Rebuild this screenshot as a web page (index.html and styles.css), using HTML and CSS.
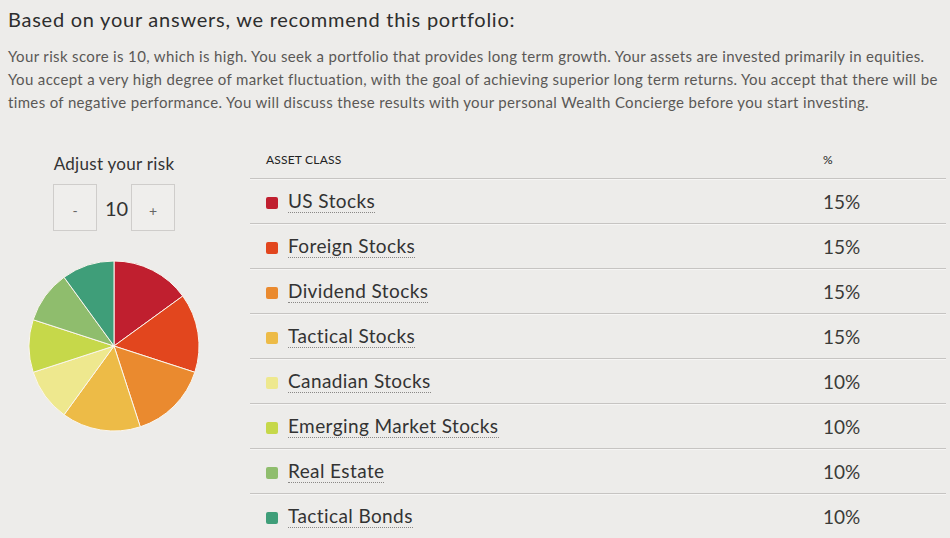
FILE: index.html
```html
<!DOCTYPE html>
<html>
<head>
<meta charset="utf-8">
<link rel="stylesheet" href="styles.css">
</head>
<body>
<h1 class="title">Based on your answers, we recommend this portfolio:</h1>
<p class="summary">Your risk score is 10, which is high. You seek a portfolio that provides long term growth. Your assets are invested primarily in equities. You accept a very high degree of market fluctuation, with the goal of achieving superior long term returns. You accept that there will be times of negative performance. You will discuss these results with your personal Wealth Concierge before you start investing.</p>
<div class="main">
  <div class="side">
    <div class="adjust-label">Adjust your risk</div>
    <div class="stepper">
      <button class="step-btn">-</button>
      <span class="step-val">10</span>
      <button class="step-btn">+</button>
    </div>
    <svg class="pie" width="172" height="172" viewBox="-86 -86 172 172">
      <g stroke="#fbf6ee" stroke-width="1" stroke-linejoin="round">
        <path d="M0 0 L0 -85 A85 85 0 0 1 68.77 -49.96 Z" fill="#c01f2f"/>
        <path d="M0 0 L68.77 -49.96 A85 85 0 0 1 80.84 26.27 Z" fill="#e2461e"/>
        <path d="M0 0 L80.84 26.27 A85 85 0 0 1 26.27 80.84 Z" fill="#ea8a2f"/>
        <path d="M0 0 L26.27 80.84 A85 85 0 0 1 -49.96 68.77 Z" fill="#edbb47"/>
        <path d="M0 0 L-49.96 68.77 A85 85 0 0 1 -80.84 26.27 Z" fill="#eee88e"/>
        <path d="M0 0 L-80.84 26.27 A85 85 0 0 1 -80.84 -26.27 Z" fill="#c6d84a"/>
        <path d="M0 0 L-80.84 -26.27 A85 85 0 0 1 -49.96 -68.77 Z" fill="#8fbd6d"/>
        <path d="M0 0 L-49.96 -68.77 A85 85 0 0 1 0 -85 Z" fill="#3f9e79"/>
      </g>
    </svg>
  </div>
  <div class="table">
    <div class="row head">
      <div class="cell-name">ASSET CLASS</div>
      <div class="cell-pct">%</div>
    </div>
    <div class="row">
      <div class="cell-name"><span class="swatch c1"></span><span class="asset">US Stocks</span></div>
      <div class="cell-pct">15%</div>
    </div>
    <div class="row">
      <div class="cell-name"><span class="swatch c2"></span><span class="asset">Foreign Stocks</span></div>
      <div class="cell-pct">15%</div>
    </div>
    <div class="row">
      <div class="cell-name"><span class="swatch c3"></span><span class="asset">Dividend Stocks</span></div>
      <div class="cell-pct">15%</div>
    </div>
    <div class="row">
      <div class="cell-name"><span class="swatch c4"></span><span class="asset">Tactical Stocks</span></div>
      <div class="cell-pct">15%</div>
    </div>
    <div class="row">
      <div class="cell-name"><span class="swatch c5"></span><span class="asset">Canadian Stocks</span></div>
      <div class="cell-pct">10%</div>
    </div>
    <div class="row">
      <div class="cell-name"><span class="swatch c6"></span><span class="asset">Emerging Market Stocks</span></div>
      <div class="cell-pct">10%</div>
    </div>
    <div class="row">
      <div class="cell-name"><span class="swatch c7"></span><span class="asset">Real Estate</span></div>
      <div class="cell-pct">10%</div>
    </div>
    <div class="row">
      <div class="cell-name"><span class="swatch c8"></span><span class="asset">Tactical Bonds</span></div>
      <div class="cell-pct">10%</div>
    </div>
  </div>
</div>
</body>
</html>
```
FILE: styles.css
```css
html, body {
  background: #edecea;
}
body {
  margin: 0;
  padding: 0 0 0 8px;
  font-family: Lato, "Open Sans", sans-serif;
  color: #333;
  overflow: hidden;
}
.title {
  margin: 0;
  padding-top: 7px;
  font-size: 20px;
  font-weight: 400;
  line-height: 24px;
  letter-spacing: 0.75px;
  color: #2e2e2e;
}
.summary {
  margin: 14px 0 0 0;
  font-size: 15px;
  line-height: 23px;
  letter-spacing: 0.35px;
  color: #5a5856;
}
.main {
  display: flex;
  gap: 30px;
  margin-top: 27px;
}
.side {
  width: 212px;
  display: flex;
  flex-direction: column;
  align-items: center;
  padding-top: 13px;
}
.adjust-label {
  font-size: 17px;
  line-height: 20px;
  letter-spacing: 0.3px;
  color: #333;
}
.stepper {
  display: flex;
  align-items: center;
  gap: 8px;
  margin-top: 10px;
}
.step-btn {
  width: 44px;
  height: 47px;
  border: 1px solid #cfcdcb;
  background: #efeeec;
  font-family: Lato, sans-serif;
  font-size: 14px;
  color: #666;
  padding: 0;
  padding-top: 6px;
}
.step-val {
  font-size: 20px;
  color: #333;
  width: 18px;
  text-align: center;
}
.pie {
  margin-top: 29px;
  display: block;
}
.table {
  width: 696px;
}
.row {
  display: flex;
  align-items: center;
  height: 44px;
  border-bottom: 1px solid #c6c4c2;
  box-shadow: 0 1px 0 #f6f5f4;
}
.row.head {
  height: 37px;
}
.head .cell-name, .head .cell-pct {
  font-size: 12px;
  letter-spacing: 0.2px;
  color: #222;
}
.cell-name {
  flex: 1;
  padding-left: 16px;
  display: flex;
  align-items: center;
  font-size: 19px;
}
.cell-pct {
  width: 123px;
  font-size: 19px;
  color: #3a3a38;
}
.swatch {
  width: 12px;
  height: 12px;
  border-radius: 2px;
  margin-right: 10px;
  margin-top: 4px;
}
.asset {
  color: #333;
  border-bottom: 1px dotted #8a8886;
  line-height: 22px;
  letter-spacing: 0.4px;
}
.c1 { background: #c01f2f; }
.c2 { background: #e2461e; }
.c3 { background: #ea8a2f; }
.c4 { background: #edbb47; }
.c5 { background: #eee88e; }
.c6 { background: #c6d84a; }
.c7 { background: #8fbd6d; }
.c8 { background: #3f9e79; }
```
